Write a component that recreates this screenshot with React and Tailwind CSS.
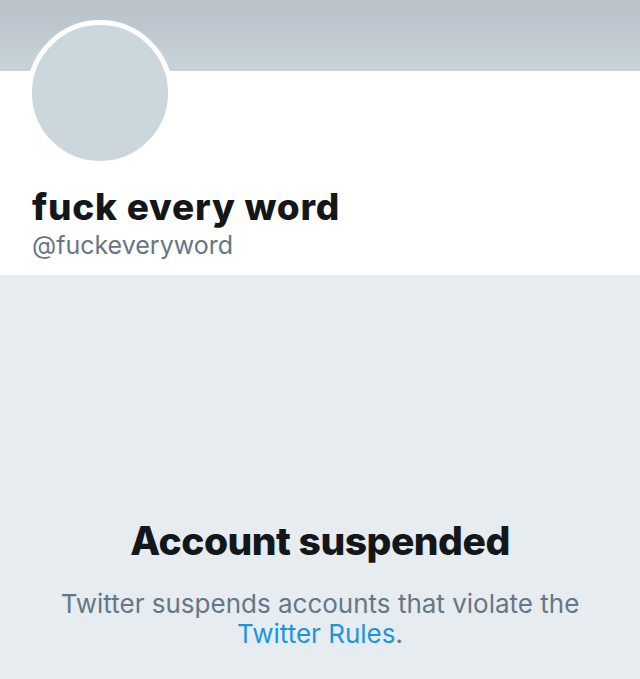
import React from 'react';

const App = () => {
  return (
    <div className="w-[640px] h-[679px] overflow-hidden bg-[#e6ecf0] font-['Inter','Liberation_Sans',sans-serif]">
      <div className="relative">
        <div className="h-[71px] bg-gradient-to-b from-[#b9c1c9] to-[#c8d3da]" />
        <div className="absolute left-[27px] top-[20px] w-[146px] h-[146px] rounded-full border-[5px] border-white bg-[#ccd6dd]" />
        <div className="h-[204px] bg-white px-[32px] pt-[114px]">
          <h1 className="text-[37px] leading-[44px] font-extrabold text-[#14171a] tracking-[0.8px]">fuck every word</h1>
          <p className="text-[25px] leading-[30px] text-[#657786] mt-[1px]">@fuckeveryword</p>
        </div>
      </div>

      <div className="flex flex-col items-center text-center pt-[243px]">
        <h2 className="text-[39px] leading-[46px] font-extrabold text-[#14171a] tracking-[-0.5px]">Account suspended</h2>
        <p className="mt-[25px] text-[26px] leading-[30px] text-[#657786] w-[580px]">
          Twitter suspends accounts that violate the{' '}
          <span className="text-[#1b95e0]">Twitter Rules</span>.
        </p>
      </div>
    </div>
  );
};

export default App;
